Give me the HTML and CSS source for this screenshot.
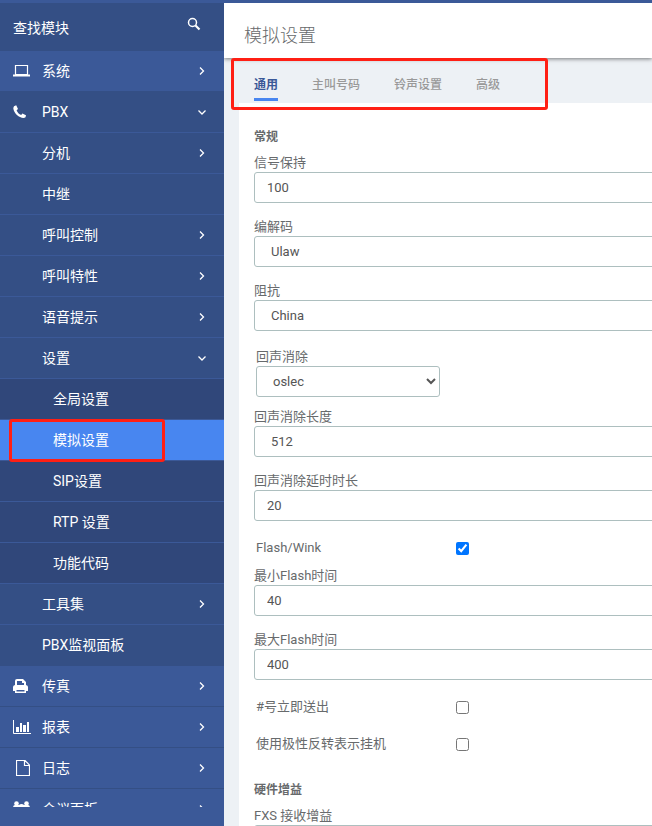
FILE: index.html
```html
<!DOCTYPE html>
<html lang="zh-CN">
<head>
<meta charset="utf-8">
<title>模拟设置</title>
<link rel="stylesheet" href="styles.css">
</head>
<body>
<svg class="defs" aria-hidden="true">
  <symbol id="right" viewBox="0 0 10 10"><path d="M3 1.500L6.500 5L3 8.500" fill="none" stroke="currentColor" stroke-width="1.300"/></symbol>
  <symbol id="down" viewBox="0 0 10 10"><path d="M1.500 3.500L5 7L8.500 3.500" fill="none" stroke="currentColor" stroke-width="1.300"/></symbol>
</svg>
<div class="app">
  <aside class="sidebar">
    <div class="search">
      <input class="search-input" type="text" placeholder="查找模块" aria-label="查找模块">
      <button class="search-button" type="button" aria-label="查找"><svg viewBox="0 0 14 14" width="14" height="14"><circle cx="5.500" cy="5.500" r="4" fill="none" stroke="currentColor" stroke-width="1.500"/><path d="M8.500 8.500L12.500 12.500" stroke="currentColor" stroke-width="2.200"/></svg></button>
    </div>
    <nav class="menu">
      <a class="item" href="#"><span class="icon"><svg viewBox="0 0 18 14" width="18" height="14"><path d="M2.500 1.500H14.500V10.500H2.500Z" fill="none" stroke="currentColor" stroke-width="1.200"/><path d="M0 10.500H17V12.500H0Z" fill="currentColor"/></svg></span>系统<svg class="arrow"><use href="#right"/></svg></a>
      <a class="item sub" href="#"><span class="icon"><svg viewBox="0 0 14 14" width="14" height="14"><path d="M1 1.200L3.200 0.300L5 4L3.600 5.200C4.400 7.500 6 9 8.200 9.900L9.400 8.500L13 10.300L12.500 12.200C11.500 13.200 9.500 13.300 7 12C3 10 0.500 6.500 0.300 3Z" fill="currentColor"/></svg></span>PBX<svg class="arrow"><use href="#down"/></svg></a>
      <a class="item sub" href="#">分机<svg class="arrow"><use href="#right"/></svg></a>
      <a class="item sub" href="#">中继</a>
      <a class="item sub" href="#">呼叫控制<svg class="arrow"><use href="#right"/></svg></a>
      <a class="item sub" href="#">呼叫特性<svg class="arrow"><use href="#right"/></svg></a>
      <a class="item sub" href="#">语音提示<svg class="arrow"><use href="#right"/></svg></a>
      <a class="item sub" href="#">设置<svg class="arrow"><use href="#down"/></svg></a>
      <a class="item leaf" href="#">全局设置</a>
      <a class="item leaf current" href="#" aria-current="page">模拟设置<span class="mark mark-item"></span></a>
      <a class="item leaf" href="#">SIP设置</a>
      <a class="item leaf" href="#">RTP 设置</a>
      <a class="item leaf" href="#">功能代码</a>
      <a class="item sub" href="#">工具集<svg class="arrow"><use href="#right"/></svg></a>
      <a class="item sub last" href="#">PBX监视面板</a>
      <a class="item" href="#"><span class="icon"><svg viewBox="0 0 16 14" width="16" height="14"><path fill-rule="evenodd" d="M2 6V2Q2 0 4 0H10L13 3V6Q15 6.500 15 8V12H13V14H2V12H0V8Q0 6.500 2 6ZM4 2V6H11V4H9V2ZM3.500 11V12.500H11.500V11Z" fill="currentColor"/></svg></span>传真<svg class="arrow"><use href="#right"/></svg></a>
      <a class="item" href="#"><span class="icon"><svg viewBox="0 0 18 14" width="18" height="14"><path d="M0.500 0V13.500H18" fill="none" stroke="currentColor"/><path d="M3 7H6V12H3ZM7 3H9V12H7ZM10 5H13V12H10ZM14 2H16V12H14Z" fill="currentColor"/></svg></span>报表<svg class="arrow"><use href="#right"/></svg></a>
      <a class="item" href="#"><span class="icon icon-file"><svg viewBox="0 0 14 16" width="14" height="16"><path d="M0.500 0.500H9L13.500 5V15.500H0.500ZM8.500 0.500V5.500H13.500" fill="none" stroke="currentColor" stroke-width="1.200"/></svg></span>日志<svg class="arrow"><use href="#right"/></svg></a>
      <a class="item" href="#"><span class="icon"><svg viewBox="0 0 18 16" width="18" height="16"><circle cx="3.500" cy="2.500" r="2.300" fill="currentColor"/><circle cx="13.500" cy="2.500" r="2.300" fill="currentColor"/><circle cx="8.500" cy="6" r="3" fill="currentColor"/><path d="M0 7Q0 4 2 4H15Q17 4 17 7L13 8H4ZM3 15V12Q4 9 8.500 9T14 12V15Z" fill="currentColor"/></svg></span>会议面板<svg class="arrow"><use href="#right"/></svg></a>
    </nav>
  </aside>
  <main class="main">
    <header class="header"><h1 class="title">模拟设置</h1></header>
    <nav class="tabs">
      <a class="tab active" href="#">通用</a>
      <a class="tab" href="#">主叫号码</a>
      <a class="tab" href="#">铃声设置</a>
      <a class="tab" href="#">高级</a>
      <span class="mark mark-tabs"></span>
    </nav>
    <form class="panel">
      <h2 class="section">常规</h2>
      <div class="field first"><label for="hold">信号保持</label><input class="control" id="hold" type="text" value="100"></div>
      <div class="field"><label for="codec">编解码</label><select class="control" id="codec"><option>Ulaw</option></select></div>
      <div class="field"><label for="impedance">阻抗</label><select class="control" id="impedance"><option>China</option></select></div>
      <div class="field compact"><label for="echo">回声消除</label><select class="control" id="echo"><option>oslec</option></select></div>
      <div class="field tight"><label for="taps">回声消除长度</label><select class="control" id="taps"><option>512</option></select></div>
      <div class="field"><label for="delay">回声消除延时时长</label><input class="control" id="delay" type="text" value="20"></div>
      <div class="check"><label for="flash">Flash/Wink</label><input id="flash" type="checkbox" checked></div>
      <div class="field after-check"><label for="minflash">最小Flash时间</label><input class="control" id="minflash" type="text" value="40"></div>
      <div class="field"><label for="maxflash">最大Flash时间</label><input class="control" id="maxflash" type="text" value="400"></div>
      <div class="check"><label for="pound">#号立即送出</label><input id="pound" type="checkbox"></div>
      <div class="check"><label for="polarity">使用极性反转表示挂机</label><input id="polarity" type="checkbox"></div>
      <h2 class="section">硬件增益</h2>
      <div class="field first"><label for="rxgain">FXS 接收增益</label><input class="control" id="rxgain" type="text"></div>
    </form>
  </main>
</div>
</body>
</html>
```
FILE: styles.css
```css
* {
  box-sizing: border-box;
}

body {
  margin: 0;
  overflow: hidden;
  background: #edf1f5;
  color: #676a6c;
  font: 400 13px/18px Roboto, "Noto Sans CJK SC", sans-serif;
}

a {
  color: inherit;
  text-decoration: none;
}

.defs {
  display: none;
}

.app {
  display: flex;
  height: 100vh;
  border-top: 3px solid #3b5998;
}

/* Sidebar */
.sidebar {
  display: flex;
  flex: 0 0 224px;
  flex-direction: column;
  min-width: 0;
  padding-bottom: 19px;
  background: #3b5998;
  color: #fff;
  font-size: 14px;
}

.search {
  display: flex;
  flex: 0 0 48px;
  align-items: center;
  padding: 0 23px 0 13px;
  background: #344f85;
}

.search-input {
  flex: 1;
  min-width: 0;
  padding: 2px 0 0;
  border: 0;
  background: none;
  color: #fff;
  font: inherit;
}

.search-input::placeholder {
  color: #fff;
}

.search-button {
  display: flex;
  padding: 0 0 6px;
  border: 0;
  background: none;
  color: #fff;
}

.menu {
  flex: 1;
  min-height: 0;
  overflow: hidden;
}

.item {
  position: relative;
  display: flex;
  align-items: center;
  height: 41px;
  padding: 0 17px 0 13px;
  border-bottom: 1px solid #344f85;
}

.icon {
  display: flex;
  flex: 0 0 29px;
}

.icon-file {
  padding-left: 3px;
}

.arrow {
  width: 10px;
  height: 10px;
  margin-left: auto;
}

.sub {
  border-color: #3b5998;
  background: #344f85;
}

.sub:not(:has(.icon)) {
  padding-left: 42px;
}

.last {
  border-color: #344f85;
}

.leaf {
  padding-left: 53px;
  border-color: #3b5998;
  background: #30477a;
}

.current {
  background: #4886f0;
}

/* Highlight frames */
.mark {
  position: absolute;
  z-index: 1;
  border: 3px solid #ff1f14;
  border-radius: 3px;
  pointer-events: none;
}

.mark-item {
  inset: -1px 59px -2px 9px;
}

.mark-tabs {
  top: 0;
  bottom: -7px;
  left: 7px;
  width: 317px;
}

/* Content */
.main {
  flex: 1;
  min-width: 0;
  overflow: hidden;
}

.header {
  position: relative;
  display: flex;
  align-items: center;
  height: 55px;
  padding: 11px 20px 0;
  background: #fff;
  box-shadow: 0 1px 4px rgba(0, 0, 0, 0.5);
}

.title {
  margin: 0;
  font-size: 18px;
  font-weight: 300;
  line-height: 24px;
}

.tabs {
  position: relative;
  display: flex;
  gap: 34px;
  height: 45px;
  padding: 16px 30px 0;
  color: #999;
  font-size: 12px;
  font-weight: 500;
}

.tab {
  height: 27px;
  line-height: 22px;
}

.active {
  border-bottom: 3px solid #4886f0;
  color: #3b5998;
  font-weight: 700;
}

.panel {
  margin-left: 15px;
  margin-right: -48px;
  padding: 25px 15px;
  background: #fff;
}

.section {
  margin: 0;
  font-size: 12px;
  font-weight: 700;
  line-height: 18px;
}

.check + .section {
  margin-top: 28px;
}

.field {
  display: flex;
  flex-direction: column;
  margin-top: 15px;
}

.first {
  margin-top: 8px;
}

.compact {
  width: 184px;
  margin-top: 17px;
  margin-left: 2px;
}

.tight {
  margin-top: 11px;
}

.after-check {
  margin-top: 10px;
}

.control {
  width: 100%;
  height: 31px;
  padding: 6px 12px;
  border: 1px solid #adbfbf;
  border-radius: 3px;
  background: #fff;
  color: #555;
  font: inherit;
}

.compact .control {
  padding-right: 0;
}

.check {
  display: flex;
  align-items: center;
  margin-top: 18px;
  padding-left: 2px;
}

.check + .check {
  margin-top: 19px;
}

.check label {
  flex: 0 0 200px;
}

.check input {
  width: 13px;
  height: 13px;
  margin: 0;
}
```
